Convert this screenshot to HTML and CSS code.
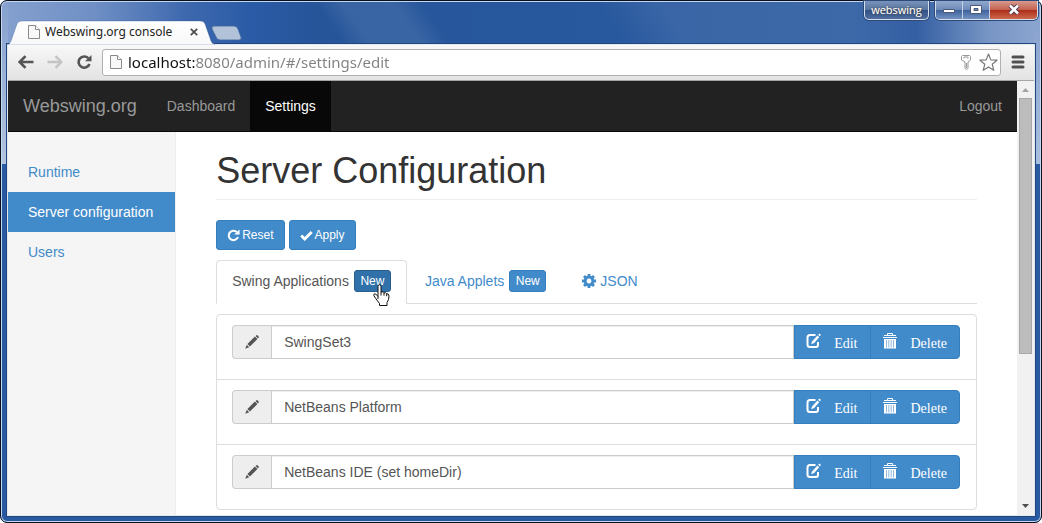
FILE: index.html
```html
<!DOCTYPE html>
<html lang="en">
<head>
<meta charset="utf-8">
<title>Webswing.org console</title>
<link rel="stylesheet" href="styles.css">
</head>
<body>
<svg class="defs" aria-hidden="true">
  <defs>
    <symbol id="page" viewBox="0 0 12 14"><path d="M.5.5h7l4 4v9H.5z" fill="#f8f8f8" stroke="#8a8a8a"/><path d="M7.500.5v4h4" fill="#fff" stroke="#8a8a8a"/></symbol>
    <symbol id="pencil" viewBox="0 0 14 14"><path fill="currentColor" d="M10.600.9 11.500.2q.5-.3 1 .1l1.200 1.200q.4.500 0 1l-.8.9zM9.900 1.600l2.500 2.500-7.500 7.500-2.500-2.500zM1.800 9.800l2.400 2.400L.2 13.700z"/></symbol>
    <symbol id="edit" viewBox="0 0 16 16"><path fill="none" stroke="currentColor" stroke-width="2" d="M9.500 2H4Q1.500 2 1.500 4.500v7Q1.500 14 4 14h6Q12 14 12 11.500V9"/><path fill="currentColor" d="m11.500 2.500 1.700 1.700-5 5.800-3 1.300L6 8.500zM12.200 1.700 13.500.5 15 2l-1.200 1.300z"/></symbol>
    <symbol id="trash" viewBox="0 0 14 16"><path fill="none" stroke="currentColor" d="M4.500 2.500v-2h5v2"/><path fill="currentColor" d="M1 2h12v1H1zM0 4h14v1H0zM1 6h12v9.500H1z"/><path stroke="#8db9e0" d="M3.500 7v7.500M5.800 7v7.500M8.200 7v7.500M10.500 7v7.500"/></symbol>
    <symbol id="refresh" viewBox="0 0 14 14"><path fill="none" stroke="currentColor" stroke-width="2.200" d="M11.800 8.600A5.100 5.100 0 1 1 10.600 3.300"/><path fill="currentColor" d="M13.500.5V6H7.800z"/></symbol>
    <symbol id="ok" viewBox="0 0 14 14"><path fill="currentColor" d="M.3 8.100 2.400 6l2.700 2.500 6.400-6.400 2.200 2.100-8.300 8.400q-.4.300-.8 0z"/></symbol>
    <symbol id="cog" viewBox="0 0 14 14"><path fill="none" stroke="currentColor" stroke-width="3" d="M7 3.100a3.900 3.900 0 1 0 .01 0z"/><path stroke="currentColor" stroke-width="2.800" d="M7 0v2.500M7 11.500V14M0 7h2.500M11.500 7H14M2 2l1.800 1.800M10.200 10.200 12 12M12 2l-1.800 1.800M3.800 10.200 2 12"/></symbol>
  </defs>
</svg>
<div class="window">
  <header class="titlebar">
    <div class="tab">
      <svg class="tab-shape" viewBox="0 0 208 25" aria-hidden="true"><defs><linearGradient id="tabfill" x2="0" y2="1"><stop stop-color="#fff"/><stop offset="1" stop-color="#f8f8f8"/></linearGradient></defs><path fill="url(#tabfill)" stroke="#244c86" stroke-opacity=".5" stroke-width=".6" d="M0 25q3-1 4-4l6-17q1-3 5-3h178q4 0 5 3l6 17q1 3 4 3v1z"/></svg>
      <svg class="page-icon" aria-hidden="true"><use href="#page"/></svg>
      <span class="tab-title">Webswing.org console</span>
      <button class="tab-close" aria-label="Close tab"><svg viewBox="0 0 8 8"><path stroke="#4a4a4a" stroke-width="1.700" d="m.8.8 6.400 6.400m0-6.400L.8 7.200"/></svg></button>
    </div>
    <button class="new-tab" aria-label="New tab"><svg viewBox="0 0 32 16"><path fill="#b1c2d9" stroke="#3d629b" stroke-width=".8" d="M3 1h20q3 0 4 3l3 8q1 3-2 3H9q-3 0-4-3L1 4q-1-3 2-3z"/></svg></button>
    <div class="controls">
      <button class="user">webswing</button>
      <div class="buttons">
        <button aria-label="Minimize"><svg viewBox="0 0 12 12"><path fill="#fff" stroke="#4b5876" d="M.5 5.500h11v3H.5z"/></svg></button>
        <button aria-label="Maximize"><svg viewBox="0 0 12 12"><path fill="#fff" fill-rule="evenodd" stroke="#4b5876" d="M.5 1.500h11v8H.5zm3.500 3h4v2H4z"/></svg></button>
        <button class="close" aria-label="Close"><svg viewBox="0 0 12 12"><path stroke="#4b3a56" stroke-width="4.500" d="m2 1.500 8 8m0-8-8 8"/><path stroke="#fff" stroke-width="2.600" d="m2 1.500 8 8m0-8-8 8"/></svg></button>
      </div>
    </div>
  </header>
  <div class="shell">
    <div class="toolbar">
      <button aria-label="Back"><svg viewBox="0 0 16 14"><path fill="none" stroke="#555" stroke-width="2.600" d="M15.500 7H2M7.500 1.200 1.700 7l5.800 5.800"/></svg></button>
      <button aria-label="Forward"><svg viewBox="0 0 16 14"><path fill="none" stroke="#c4c4c4" stroke-width="2.400" d="M.5 7H14M8.500 1.200 14.300 7l-5.800 5.800"/></svg></button>
      <button aria-label="Reload"><svg viewBox="0 0 16 14"><path fill="none" stroke="#555" stroke-width="2.600" d="M13.500 9A5.600 5.600 0 1 1 12.300 3.200"/><path fill="#555" d="M15.500 0v6.300H9z"/></svg></button>
      <div class="omnibox">
        <svg class="page-icon" aria-hidden="true"><use href="#page"/></svg>
        <input type="text" aria-label="Address" value="localhost:8080/admin/#/settings/edit">
        <svg class="key" viewBox="0 0 10 15" aria-hidden="true"><path fill="#fff" stroke="#999" d="M1.500.500h7l1 1V5L7 7v6.500l-1.500 1L4 13.500V7L.5 5V1.500zM3 3.500V2h4v1.500M5.500 8v5"/></svg>
        <svg class="star" viewBox="0 0 19 18" aria-hidden="true"><path fill="#fff" stroke="#777" stroke-width="1.200" stroke-linejoin="round" d="m9.500 1 2.300 5.900 6.200.3-4.800 4 1.600 6.100-5.300-3.400-5.300 3.400 1.600-6.100-4.800-4 6.200-.3z"/></svg>
      </div>
      <button aria-label="Menu"><svg viewBox="0 0 14 14"><path stroke="#505050" stroke-width="3" stroke-linecap="round" d="M2 2h10M2 7h10M2 12h10"/></svg></button>
    </div>
    <div class="viewport">
      <div class="document">
        <nav class="navbar">
          <a class="brand" href="#">Webswing.org</a>
          <a href="#">Dashboard</a>
          <a class="active" href="#">Settings</a>
          <a class="logout" href="#">Logout</a>
        </nav>
        <div class="columns">
          <nav class="sidebar">
            <a href="#">Runtime</a>
            <a class="active" href="#">Server configuration</a>
            <a href="#">Users</a>
          </nav>
          <main class="main">
            <h1>Server Configuration</h1>
            <div class="actions">
              <button class="btn"><svg viewBox="0 0 14 14"><use href="#refresh"/></svg>Reset</button>
              <button class="btn"><svg viewBox="0 0 14 14"><use href="#ok"/></svg>Apply</button>
            </div>
            <div class="tabs">
              <div class="item active"><a href="#">Swing Applications</a><button class="btn-new">New<svg class="pointer" viewBox="0 0 18 23" aria-hidden="true"><path fill="#fff" stroke="#111" stroke-linejoin="round" d="M6 15V2.500q0-1.800 1.500-1.800T9 2.500V8q2.500-.8 3 .8 2.200-.6 2.700.9 2.300-.1 2.300 2.300 0 4-2 6.500v3H7.500v-2L3 13.500q-2-2.500-.8-3.600Q3.600 9 6 12.500M9 8v3.500m3-2.700v2.900m2.700-2v2.500"/></svg></button></div>
              <div class="item"><a href="#">Java Applets</a><button class="btn-new">New</button></div>
              <div class="item json"><a href="#"><svg viewBox="0 0 14 14"><use href="#cog"/></svg>JSON</a></div>
            </div>
            <ul class="list">
              <li><div class="group"><span class="addon"><svg><use href="#pencil"/></svg></span><input type="text" aria-label="Application 1" value="SwingSet3"><button><svg><use href="#edit"/></svg><span>Edit</span></button><button><svg><use href="#trash"/></svg><span>Delete</span></button></div></li>
              <li><div class="group"><span class="addon"><svg><use href="#pencil"/></svg></span><input type="text" aria-label="Application 2" value="NetBeans Platform"><button><svg><use href="#edit"/></svg><span>Edit</span></button><button><svg><use href="#trash"/></svg><span>Delete</span></button></div></li>
              <li><div class="group"><span class="addon"><svg><use href="#pencil"/></svg></span><input type="text" aria-label="Application 3" value="NetBeans IDE (set homeDir)"><button><svg><use href="#edit"/></svg><span>Edit</span></button><button><svg><use href="#trash"/></svg><span>Delete</span></button></div></li>
            </ul>
          </main>
        </div>
      </div>
      <div class="scrollbar" aria-hidden="true">
        <svg viewBox="0 0 7 4"><path fill="#a3a3a3" d="M3.500 0 7 4H0z"/></svg>
        <div class="track"><div class="thumb"></div></div>
        <svg viewBox="0 0 7 4"><path fill="#505050" d="M0 0h7L3.500 4z"/></svg>
      </div>
    </div>
  </div>
</div>
</body>
</html>
```
FILE: styles.css
```css
* { box-sizing: border-box; }
body { margin: 0; background: #fff; color: #333; font: 14px/20px "Liberation Sans", Arial, sans-serif; }
a { color: #428bca; text-decoration: none; }
button { margin: 0; padding: 0; border: 0; background: none; font: inherit; color: inherit; }
svg { display: block; flex: none; }
.defs { position: absolute; width: 0; height: 0; }

.window {
  display: flex; flex-direction: column; height: 100vh; padding: 0 6px 6px;
  border: 1px solid #07101f; border-radius: 7px;
  box-shadow: inset 0 0 0 1px #c6d7ee;
  background:
    linear-gradient(#86a1cf, #b3c4df) 0 0 / 7px 163px no-repeat,
    linear-gradient(#849fcd, #a9bedf) 100% 0 / 7px 163px no-repeat,
    linear-gradient(56deg, transparent 286px, rgba(255,255,255,.09) 308px, rgba(255,255,255,.09) 350px, transparent 374px, transparent 518px, rgba(255,255,255,.08) 570px) 0 0 / 100% 46px no-repeat,
    linear-gradient(90deg, #86a1cf, #6f8fc5 9%, #3d68ae 18%, #2b5ba6 24%, #26559a 30%, #28589e 60%, #2c5ca2 82%, #23529b 88%, #6c8cc0 95%, #849fcd) 0 0 / 100% 46px no-repeat,
    #2859a1;
}
.titlebar { display: flex; align-items: flex-end; height: 43px; flex: none; }
.tab { position: relative; display: flex; align-items: center; width: 208px; height: 24px; padding: 0 12px 0 21px; }
.tab-shape { position: absolute; left: 0; top: 0; width: 208px; height: 25px; z-index: 1; }
.tab > :not(.tab-shape) { position: relative; z-index: 2; }
.page-icon { width: 12px; height: 14px; }
.tab-title { flex: 1; margin-left: 5px; color: #222; font: 12px/16px "Noto Sans", "Open Sans", sans-serif; white-space: nowrap; }
.tab-close { width: 8px; margin-right: 5px; }
.new-tab { width: 32px; margin: 0 0 3px -4px; }
.controls { display: flex; align-self: flex-start; gap: 6px; margin: 0 -3px 0 auto; }
.user, .buttons { border: 1px solid #d4deed; border-top: 0; border-radius: 0 0 5px 5px; box-shadow: 0 0 0 1px #2d4978; }
.user { width: 65px; height: 19px; background: linear-gradient(#7892bb, #57759f 50%, #304f83 50%, #516f9f); color: #fff; font: 11px/16px "Open Sans", sans-serif; text-shadow: 0 0 2px #000, 0 0 1px #fff; }
.buttons { display: flex; height: 19px; overflow: hidden; }
.buttons button { display: flex; align-items: center; justify-content: center; width: 27px; background: linear-gradient(#90a8cc, #6c89b7 50%, #3d619b 50%, #7392c2); border-right: 1px solid #c5d1e4; }
.buttons svg { width: 12px; height: 12px; }
.buttons .close { width: 47px; border: 0; background: linear-gradient(#d89a8f, #c4604c 50%, #a92b18 50%, #ce6a4e); }

.shell { display: flex; flex-direction: column; flex: 1; min-height: 0; border: 1px solid #e3e8ee; box-shadow: 0 0 0 1px #21477f; background: #fff; }
.toolbar { display: flex; align-items: center; height: 36px; flex: none; padding: 0 9px 1px 10px; gap: 13px; border-bottom: 1px solid #a5a5a5; background: linear-gradient(#f8f8f8, #e3e3e3); }
.toolbar button { width: 16px; }
.toolbar > button:last-child { width: 14px; margin-left: -3px; }
.omnibox { display: flex; align-items: center; flex: 1; height: 27px; padding: 0 2px 0 7px; margin-left: -3px; border: 1px solid #b0b0b0; border-radius: 3px; background: #fff; }
.omnibox input { flex: 1; min-width: 0; height: 24px; margin: 0 0 0 6px; padding: 0; border: 0; outline: 0; font: 15px/24px "Noto Sans", "Open Sans", sans-serif; color: #808080; background: linear-gradient(90deg, #111 68px, #808080 68px); -webkit-background-clip: text; background-clip: text; -webkit-text-fill-color: transparent; }
.key { width: 10px; height: 15px; margin-right: 8px; }
.star { width: 19px; height: 18px; }

.viewport { display: flex; flex: 1; min-height: 0; }
.document { display: flex; flex-direction: column; flex: 1; min-width: 0; overflow: hidden; }
.navbar { display: flex; flex: none; height: 51px; background: #222; border-bottom: 1px solid #080808; }
.navbar a { padding: 15px; color: #999; }
.navbar .brand { font-size: 18px; }
.navbar .active { color: #fff; background: #080808; }
.navbar .logout { margin-left: auto; }
.columns { display: flex; flex: 1; min-height: 0; }
.sidebar { width: 16.6667%; flex: none; padding-top: 20px; background: #f5f5f5; border-right: 1px solid #eee; }
.sidebar a { display: block; padding: 10px 0 10px 20px; white-space: nowrap; }
.sidebar .active { color: #fff; background: #428bca; }
.main { flex: 1; min-width: 0; padding: 0 40px; }
h1 { margin: 19px 0 20px; padding-bottom: 9px; border-bottom: 1px solid #eee; font-size: 36px; font-weight: 400; line-height: 39px; }
.actions { display: flex; gap: 4px; margin-bottom: 10px; }
.btn { display: flex; align-items: center; gap: 2px; height: 30px; padding: 0 10px; border: 1px solid #357ebd; border-radius: 3px; background: #428bca; color: #fff; font-size: 12px; line-height: 18px; }
.btn svg { width: 13px; height: 13px; }
.tabs { display: flex; gap: 2px; height: 44px; border-bottom: 1px solid #ddd; }
.item { display: flex; align-items: center; gap: 5px; height: 44px; padding: 0 15px 2px; border: 1px solid transparent; border-radius: 4px 4px 0 0; }
.item a { display: flex; gap: 4px; align-items: center; }
.item.active { border-color: #ddd; border-bottom-color: #fff; background: #fff; }
.item.active a { color: #555; }
.item svg { width: 14px; height: 14px; }
.json { margin-left: 2px; }
.btn-new { position: relative; height: 22px; padding: 0 5px; border: 1px solid #357ebd; border-radius: 3px; background: #428bca; color: #fff; font-size: 12px; line-height: 18px; width: 37px; }
.active .btn-new { background: #3071a9; border-color: #285e8e; }
.item .pointer { position: absolute; left: 17px; top: 13px; width: 18px; height: 23px; z-index: 3; }
.list { margin: 10px 0 0; padding: 0; list-style: none; border: 1px solid #ddd; border-radius: 4px; }
.list li { padding: 10px 16px 20px 15px; }
.list li + li { border-top: 1px solid #ddd; }
.group { display: flex; height: 34px; }
.addon { display: flex; align-items: center; justify-content: center; width: 39px; color: #555; background: #eee; border: 1px solid #ccc; border-right: 0; border-radius: 4px 0 0 4px; }
.addon svg { width: 14px; height: 14px; }
.group input { flex: 1; min-width: 0; padding: 0 12px; border: 1px solid #ccc; border-radius: 0; outline: 0; color: #555; background: #fff; font: inherit; box-shadow: inset 0 1px 1px rgba(0,0,0,.075); }
.group button { display: flex; align-items: center; gap: 12px; height: 34px; padding: 0 12px 0 11px; border: 1px solid #357ebd; background: #428bca; color: #fff; font: 14px/16px "Liberation Serif", "Times New Roman", serif; }
.group input + button { padding-right: 13px; }
.group button svg { width: 16px; height: 16px; margin-bottom: 2px; }
.group button span { padding-top: 4px; }
.group button + button { margin-left: -1px; border-radius: 0 4px 4px 0; }

.scrollbar { display: flex; flex-direction: column; align-items: center; justify-content: space-between; width: 17px; flex: none; padding: 7px 0; background: #f1f1f1; }
.scrollbar svg { width: 7px; height: 4px; }
.track { flex: 1; width: 13px; padding: 6px 0; }
.thumb { height: 64%; background: #bcbcbc; border: 1px solid #a8a8a8; }
```
